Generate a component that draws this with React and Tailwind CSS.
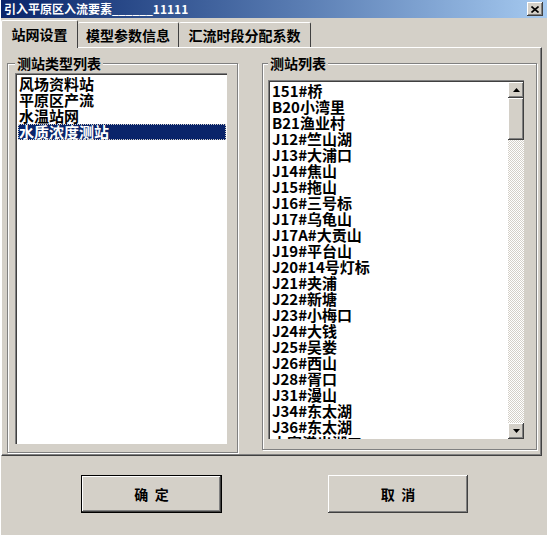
import React from 'react';

const stations = [
  '151#桥',
  'B20小湾里',
  'B21渔业村',
  'J12#竺山湖',
  'J13#大浦口',
  'J14#焦山',
  'J15#拖山',
  'J16#三号标',
  'J17#乌龟山',
  'J17A#大贡山',
  'J19#平台山',
  'J20#14号灯标',
  'J21#夹浦',
  'J22#新塘',
  'J23#小梅口',
  'J24#大钱',
  'J25#吴娄',
  'J26#西山',
  'J28#胥口',
  'J31#漫山',
  'J34#东太湖',
  'J36#东太湖',
  '大富港出湖口',
];

const types = ['风场资料站', '平原区产流', '水温站网', '水质浓度测站'];

const raised =
  'bg-[#d4d0c8] shadow-[inset_-1px_-1px_0_#404040,inset_1px_1px_0_#ffffff,inset_-2px_-2px_0_#808080]';

function Arrow({ down }) {
  return (
    <svg width="7" height="4" viewBox="0 0 7 4">
      {down ? <path d="M0 0h7L3.5 4z" fill="#000" /> : <path d="M0 4h7L3.5 0z" fill="#000" />}
    </svg>
  );
}

function Sunken({ className, children }) {
  return (
    <div className={`border-t border-l border-[#808080] border-r-white border-b-white ${className}`}>
      <div className="h-full w-full border-t border-l border-[#404040] border-r-[#d4d0c8] border-b-[#d4d0c8] bg-white overflow-hidden">
        {children}
      </div>
    </div>
  );
}

function Group({ label, className, children }) {
  return (
    <fieldset
      className={`border border-[#808080] shadow-[1px_1px_0_#ffffff,inset_1px_1px_0_#ffffff] ${className}`}
    >
      <legend className="px-[2px] bg-[#d4d0c8] text-[14px] font-bold leading-[16px] text-black">
        {label}
      </legend>
      {children}
    </fieldset>
  );
}

export default function App() {
  return (
    <div className="w-[547px] h-[535px] bg-[#d4d0c8] flex flex-col overflow-hidden font-['Noto_Sans_CJK_SC','Liberation_Sans',sans-serif] border-l border-white">
      {/* 标题栏 */}
      <div className="h-[18px] flex items-center justify-between pl-[3px] pr-[4px] bg-gradient-to-r from-[#0a246a] to-[#a6caf0]">
        <span className="text-[12px] font-bold text-white leading-[18px]">
          引入平原区入流要素______11111
        </span>
        <div className={`w-[16px] h-[14px] flex items-center justify-center ${raised}`}>
          <svg width="8" height="7" viewBox="0 0 8 7">
            <path d="M0.5 0.5L7.5 6.5M7.5 0.5L0.5 6.5" stroke="#000" strokeWidth="1.6" />
          </svg>
        </div>
      </div>

      {/* 选项卡 */}
      <div className="mt-[2px] h-[27px] flex items-end">
        <div className="relative z-10 -mb-px w-[77px] h-[28px] bg-[#d4d0c8] border-t border-l border-white border-r border-r-[#404040] rounded-t-[2px] flex items-center justify-center text-[14px] font-bold text-black">
          站网设置
        </div>
        <div className="w-[101px] h-[25px] border-t border-white border-r border-r-[#404040] rounded-t-[2px] flex items-center justify-center text-[14px] font-bold text-black">
          模型参数信息
        </div>
        <div className="w-[132px] h-[25px] border-t border-white border-r border-r-[#404040] rounded-t-[2px] flex items-center justify-center text-[14px] font-bold text-black">
          汇流时段分配系数
        </div>
      </div>

      {/* 选项卡面板 */}
      <div className="w-[541px] h-[409px] border-t border-l border-white border-r border-b border-r-[#404040] border-b-[#404040] shadow-[inset_-1px_-1px_0_#808080] flex pl-[5px] pt-[7px]">
        <Group label="测站类型列表" className="w-[231px] h-[398px] pl-[7px]">
          <Sunken className="mt-[2px] w-[212px] h-[371px]">
            <div className="pt-[1px] px-[1px]">
              {types.map((t, i) => (
                <div
                  key={t}
                  className={`h-[16px] leading-[16px] text-[15px] font-bold pl-[1px] ${
                    i === 3 ? 'bg-[#0a246a] text-white outline outline-1 outline-dotted outline-[#d4d0c8] -outline-offset-1' : 'text-black'
                  }`}
                >
                  {t}
                </div>
              ))}
            </div>
          </Sunken>
        </Group>

        <Group label="测站列表" className="ml-[24px] w-[275px] h-[395px] pl-[5px]">
          <Sunken className="mt-[9px] w-[256px] h-[359px]">
            <div className="flex h-full">
              <div className="flex-1 pl-[2px] pt-[1px]">
                {stations.map((s) => (
                  <div key={s} className="h-[16px] leading-[16px] text-[15px] font-bold text-black whitespace-nowrap">
                    {s}
                  </div>
                ))}
              </div>
              <div className="w-[16px] h-full flex flex-col bg-[repeating-conic-gradient(#ffffff_0_25%,#d4d0c8_0_50%)] bg-[length:2px_2px]">
                <div className={`h-[16px] flex items-center justify-center ${raised}`}>
                  <Arrow />
                </div>
                <div className={`h-[42px] ${raised}`} />
                <div className="flex-1" />
                <div className={`h-[16px] flex items-center justify-center ${raised}`}>
                  <Arrow down />
                </div>
              </div>
            </div>
          </Sunken>
        </Group>
      </div>

      {/* 按钮 */}
      <div className="mt-[19px] flex pl-[80px] gap-[106px]">
        <div className="w-[141px] h-[38px] border border-black">
          <div className={`h-full flex items-center justify-center text-[14px] font-bold text-black ${raised}`}>
            确&nbsp;&nbsp;定
          </div>
        </div>
        <div className={`w-[140px] h-[38px] flex items-center justify-center text-[14px] font-bold text-black ${raised}`}>
          取&nbsp;&nbsp;消
        </div>
      </div>
    </div>
  );
}
